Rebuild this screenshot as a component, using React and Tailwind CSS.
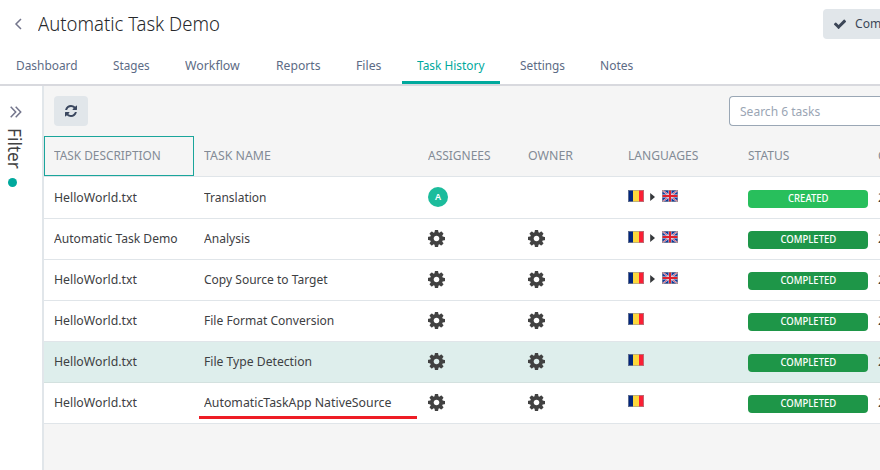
import React from "react";

const tabs = [
  ["Dashboard", "w-[97px]", "scale-x-[0.915]"],
  ["Stages", "w-[72px]", "scale-x-[0.9]"],
  ["Workflow", "w-[91px]", "scale-x-[0.95]"],
  ["Reports", "w-[80px]", "scale-x-[0.935]"],
  ["Files", "w-[61px]", "scale-x-[0.94]"],
  ["Task History", "w-[98px]", "scale-x-[0.915]", true],
  ["Settings", "w-[80px]", "scale-x-[0.91]"],
  ["Notes", "w-[66px]", "scale-x-[0.925]"],
];

const rows = [
  { desc: "HelloWorld.txt", fit: "scale-x-[0.945]", name: "Translation", nameFit: "scale-x-[0.92]", user: "A", target: true, status: "CREATED" },
  { desc: "Automatic Task Demo", fit: "scale-x-[0.93]", name: "Analysis", nameFit: "scale-x-[0.93]", target: true, status: "COMPLETED" },
  { desc: "HelloWorld.txt", fit: "scale-x-[0.945]", name: "Copy Source to Target", nameFit: "scale-x-[0.925]", target: true, status: "COMPLETED" },
  { desc: "HelloWorld.txt", fit: "scale-x-[0.945]", name: "File Format Conversion", nameFit: "scale-x-[0.927]", status: "COMPLETED" },
  { desc: "HelloWorld.txt", fit: "scale-x-[0.945]", name: "File Type Detection", nameFit: "scale-x-[0.935]", status: "COMPLETED", active: true },
  { desc: "HelloWorld.txt", fit: "scale-x-[0.945]", name: "AutomaticTaskApp NativeSource", nameFit: "scale-x-[0.947]", status: "COMPLETED", marked: true },
];

const headings = [
  ["TASK NAME", "scale-x-[0.95]"],
  ["ASSIGNEES", "scale-x-[0.92]"],
  ["OWNER", "scale-x-[0.95]"],
  ["LANGUAGES", "scale-x-[0.93]"],
  ["STATUS", "scale-x-[0.925]"],
  ["CREATED", "scale-x-[0.93]"],
];

const cols = "grid grid-cols-[150px_224px_100px_100px_120px_130px_100px]";

function Narrow({ fit, children }) {
  return <span className={`inline-block origin-left whitespace-nowrap ${fit}`}>{children}</span>;
}

function Cog() {
  return (
    <svg width="17" height="17" viewBox="0 128 1536 1536" fill="#414141">
      <path d="M1024 896q0-106-75-181t-181-75-181 75-75 181 75 181 181 75 181-75 75-181zm512-109v222q0 12-8 23t-20 13l-185 28q-19 54-39 91 35 50 107 138 10 12 10 25t-9 23q-27 37-99 108t-94 71q-12 0-26-9l-138-108q-44 23-91 38-16 136-29 186-7 28-36 28h-222q-14 0-24.5-8.5t-11.5-21.5l-28-184q-49-16-90-37l-141 107q-10 9-25 9-14 0-25-11-126-114-165-168-7-10-7-23 0-12 8-23 15-21 51-66.5t54-70.5q-27-50-41-99l-183-27q-13-2-21-12.5t-8-23.5v-222q0-12 8-23t19-13l186-28q14-46 39-92-40-57-107-138-10-12-10-24 0-10 9-23 26-36 98.5-107.5t94.5-71.5q13 0 26 10l138 107q44-23 91-38 16-136 29-186 7-28 36-28h222q14 0 24.5 8.5t11.5 21.5l28 184q49 16 90 37l142-107q9-9 24-9 13 0 25 10 129 119 165 170 7 8 7 22 0 12-8 23-15 21-51 66.5t-54 70.5q26 50 41 98l183 28q13 2 21 12.5t8 23.5z" />
    </svg>
  );
}

function Check() {
  return (
    <svg width="14" height="14" viewBox="0 0 1792 1792" fill="currentColor">
      <path d="M1671 566q0 40-28 68l-724 724-136 136q-28 28-68 28t-68-28l-136-136-362-362q-28-28-28-68t28-68l136-136q28-28 68-28t68 28l294 295 656-657q28-28 68-28t68 28l136 136q28 28 28 68z" />
    </svg>
  );
}

function Refresh() {
  return (
    <svg width="12" height="12" viewBox="0 0 1536 1536" fill="currentColor">
      <path d="M1511 928q0 5-1 7-64 268-268 434.5t-478 166.5q-146 0-282.5-55t-243.5-157l-129 129q-19 19-45 19t-45-19-19-45v-448q0-26 19-45t45-19h448q26 0 45 19t19 45-19 45l-137 137q71 66 161 102t187 36q134 0 250-65t186-179q11-17 53-117 8-23 30-23h192q13 0 22.5 9.5t9.5 22.5zm25-800v448q0 26-19 45t-45 19h-448q-26 0-45-19t-19-45 19-45l138-138q-148-137-349-137-134 0-250 65t-186 179q-11 17-53 117-8 23-30 23h-199q-13 0-22.5-9.5t-9.5-22.5v-7q65-268 270-434.5t480-166.5q146 0 284 55.5t245 156.5l130-129q19-19 45-19t45 19 19 45z" />
    </svg>
  );
}

function RomaniaFlag() {
  return (
    <svg width="16" height="12" viewBox="0 0 16 12" shapeRendering="crispEdges">
      <rect width="5" height="12" fill="#00267f" />
      <rect x="5" width="6" height="12" fill="#fcd83c" />
      <rect x="11" width="5" height="12" fill="#fb1f35" />
      <rect x=".5" y=".5" width="15" height="11" fill="none" stroke="#9a9a9a" strokeOpacity=".6" />
    </svg>
  );
}

function UkFlag() {
  return (
    <svg width="16" height="12" viewBox="0 0 16 12">
      <rect width="16" height="12" fill="#103a9c" />
      <path d="M0 0L16 12M16 0L0 12" stroke="#fff" strokeOpacity=".8" strokeWidth="1.8" />
      <path d="M0 0L16 12M16 0L0 12" stroke="#e0283c" strokeWidth=".7" />
      <path d="M8 0V12M0 6H16" stroke="#fff" strokeWidth="3.4" strokeOpacity=".6" />
      <path d="M8 0V12M0 6H16" stroke="#e0202c" strokeWidth="2" />
      <rect x=".5" y=".5" width="15" height="11" fill="none" stroke="#9a9a9a" strokeOpacity=".6" />
    </svg>
  );
}

function Row({ row, first }) {
  return (
    <div
      className={`${cols} items-center border-b text-[13px] text-[#3d4043] ${first ? "h-[42px]" : "h-[41px]"} ${
        row.active ? "border-[#d3e1df] bg-[#deeeec]" : "border-[#e0e5e9] bg-white"
      }`}
    >
      <div className="pl-2.5">
        <Narrow fit={row.fit}>{row.desc}</Narrow>
      </div>
      <div className="relative pl-2.5">
        <Narrow fit={row.nameFit}>{row.name}</Narrow>
        {row.marked && <span className="absolute top-[23px] left-[5px] h-[3px] w-[218px] bg-[#ee1c25]" />}
      </div>
      <div className="pb-px pl-2.5">
        {row.user ? (
          <span className="flex size-5 items-center justify-center rounded-full bg-[#1cbc9c] text-[9px] font-semibold text-white">
            {row.user}
          </span>
        ) : (
          <Cog />
        )}
      </div>
      <div className="pb-px pl-2.5">{!row.user && <Cog />}</div>
      <div className="flex items-center pb-1 pl-2.5">
        <RomaniaFlag />
        {row.target && (
          <>
            <svg width="18" height="12" viewBox="0 0 18 12">
              <path d="M6.2 3L11 7L6.2 11Z" fill="#35383b" />
            </svg>
            <UkFlag />
          </>
        )}
      </div>
      <div className="pt-[3px] pb-px pl-2.5">
        <span
          className={`flex h-[18px] w-[120px] items-center justify-center rounded pb-px text-[10px] font-medium text-white ${
            row.user ? "bg-[#28bf5c]" : "bg-[#1e9648]"
          }`}
        >
          <span className="scale-x-[0.95]">{row.status}</span>
        </span>
      </div>
      <div className="pl-2.5">2018</div>
    </div>
  );
}

export default function App() {
  return (
    <div className="flex h-[470px] w-[880px] flex-col overflow-hidden bg-white font-['Noto_Sans',sans-serif]">
      <header className="h-[86px] shrink-0 border-b-2 border-[#d8d9de]">
        <div className="flex h-12 items-center pl-3.5">
          <svg className="shrink-0" width="8" height="12" viewBox="0 0 8 12" fill="none" stroke="#73758c" strokeWidth="1.5">
            <path d="M7 1L2 6L7 11" />
          </svg>
          <h1 className="ml-4 w-[785px] shrink-0 text-[20px] text-[#26282b]">
            <span className="inline-block origin-left scale-x-[0.925] font-light">Automatic Task Demo</span>
          </h1>
          <button className="flex h-[30px] w-24 shrink-0 items-center rounded bg-[#e1e6ea] pl-2.5 text-[13px] text-[#3c4657]">
            <Check />
            <span className="ml-2 origin-left scale-x-[0.93]">Complete</span>
          </button>
        </div>
        <nav className="flex h-9 pl-px text-[13px] whitespace-nowrap text-[#5c6b85]">
          {tabs.map(([label, width, fit, active]) => (
            <a
              key={label}
              className={`h-9 shrink-0 pt-2 pl-[15px] ${width} ${active ? "mr-[5px] border-b-[3px] border-[#00a99d] text-[#00a99d]" : ""}`}
            >
              <Narrow fit={fit}>{label}</Narrow>
            </a>
          ))}
        </nav>
      </header>
      <div className="flex min-h-0 flex-1">
        <aside className="flex w-11 shrink-0 flex-col border-r-2 border-[#e1e6ea]">
          <svg className="mt-5 ml-2.5" width="12" height="12" viewBox="0 0 12 12" fill="none" stroke="#73758c" strokeWidth="1.5">
            <path d="M.7 .8L5.7 6L.7 11.2M5.7 .8L10.7 6L5.7 11.2" />
          </svg>
          <span className="mt-2.5 ml-[5px] origin-top scale-y-[0.96] self-start text-[18px] leading-[20px] text-[#414141] [writing-mode:vertical-rl]">
            Filter
          </span>
          <span className="mt-[7px] ml-2 size-[9px] rounded-full bg-[#00a99d]" />
        </aside>
        <main className="min-w-0 flex-1 bg-[#f5f5f5]">
          <div className="flex h-[50px] items-center justify-between pl-2.5">
            <button className="flex h-[30px] w-[34px] items-center justify-center rounded bg-[#e1e6ea] text-[#3a475f]">
              <Refresh />
            </button>
            <div className="flex h-[30px] w-[151px] items-center rounded-l border border-r-0 border-[#9aa7b5] bg-white pt-px pl-2.5 text-[13px] text-[#9aa5b4]">
              <Narrow fit="scale-x-[0.925]">Search 6 tasks</Narrow>
            </div>
          </div>
          <div className={`${cols} h-[41px] border-b border-[#e0e5e9] text-[13px] leading-[36px] text-[#838b96]`}>
            <div className="h-10 border border-[#1aa59b] pl-[9px]">
              <Narrow fit="scale-x-[0.91]">TASK DESCRIPTION</Narrow>
            </div>
            {headings.map(([label, fit]) => (
              <div key={label} className="pt-px pl-2.5">
                <Narrow fit={fit}>{label}</Narrow>
              </div>
            ))}
          </div>
          {rows.map((row, i) => (
            <Row key={row.name} row={row} first={i === 0} />
          ))}
        </main>
      </div>
    </div>
  );
}
